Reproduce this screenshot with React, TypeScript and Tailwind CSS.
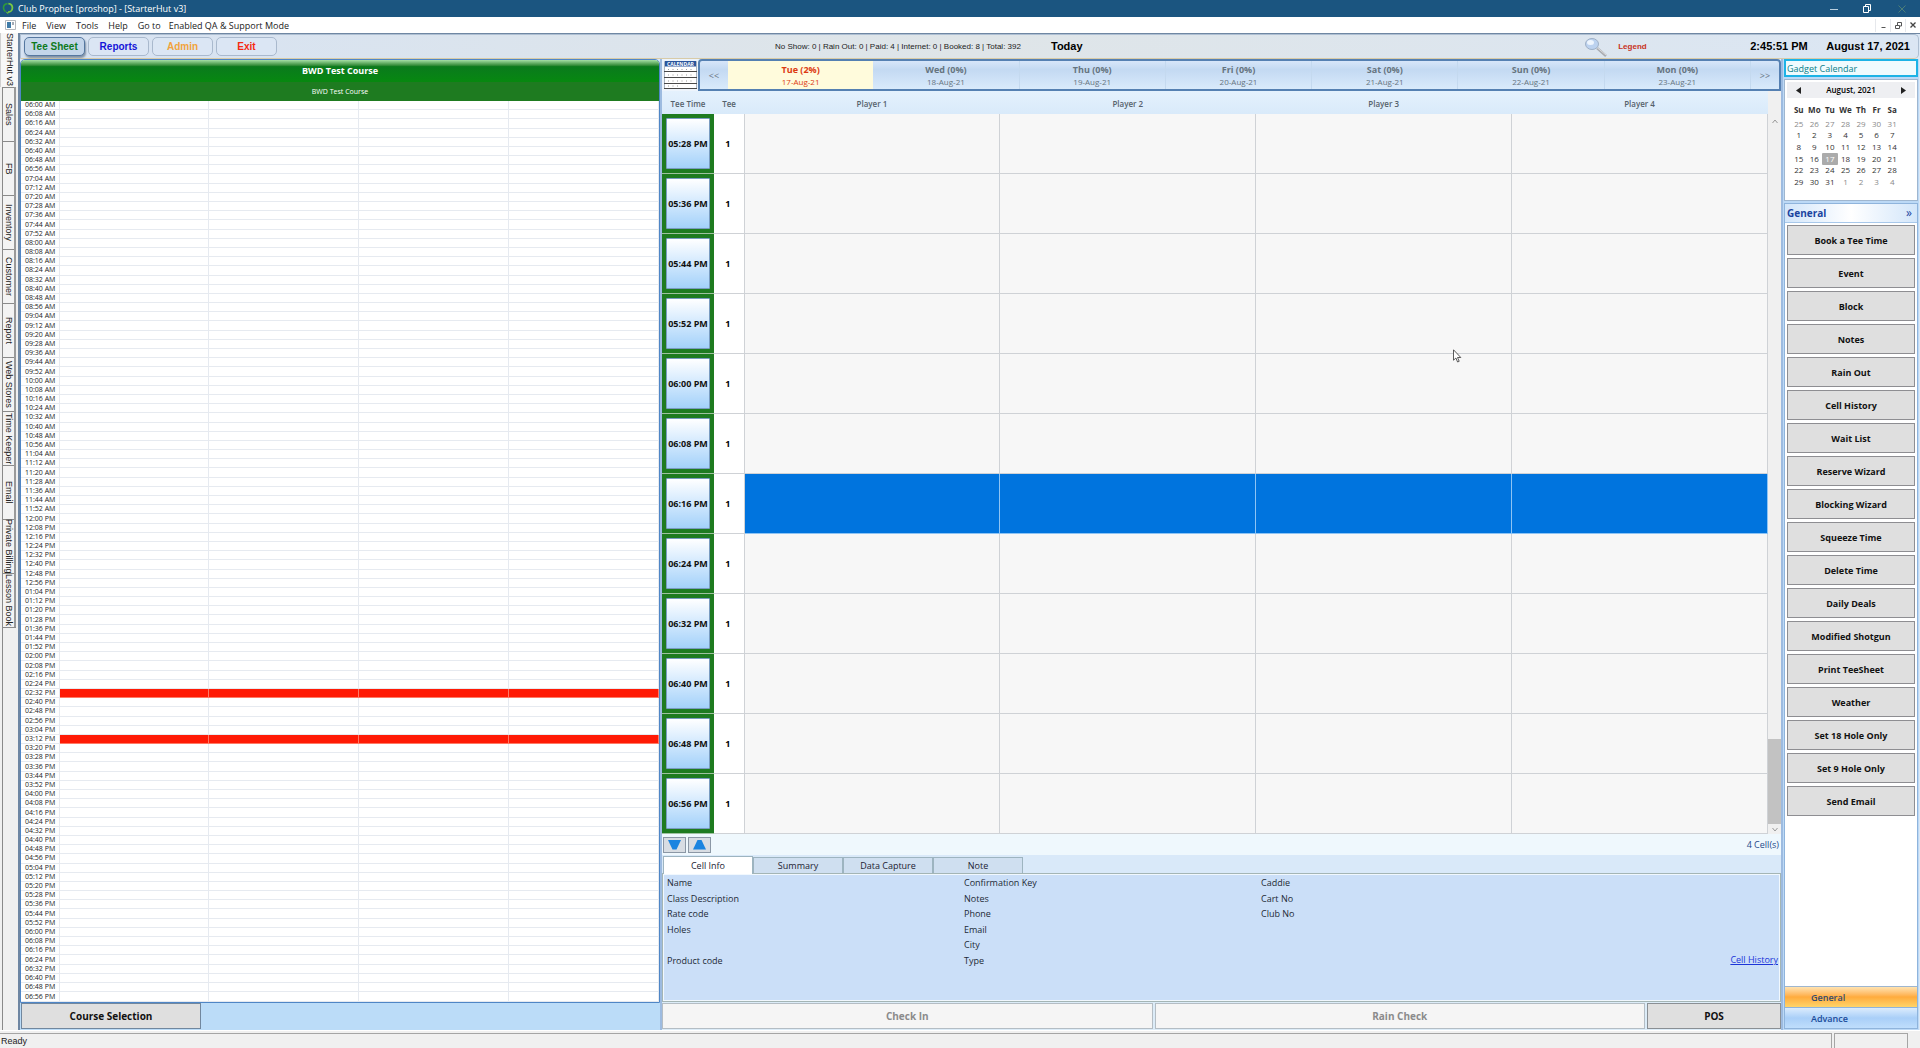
import React from "react";

const sideTabs = ["Sales", "FB", "Inventory", "Customer", "Report", "Web Stores", "Time Keeper", "Email", "Private Billing", "Lesson Book"];

const formatTime = (minutes: number) => {
  const h = Math.floor(minutes / 60);
  const m = minutes % 60;
  const h12 = h % 12 === 0 ? 12 : h % 12;
  return `${String(h12).padStart(2, "0")}:${String(m).padStart(2, "0")} ${h < 12 ? "AM" : "PM"}`;
};

const overview = Array.from({ length: 98 }, (_, i) => formatTime(360 + i * 8));
const bookedTimes = ["02:32 PM", "03:12 PM"];
const sheet = Array.from({ length: 12 }, (_, i) => formatTime(1048 + i * 8));
const selectedTime = "06:16 PM";

const days = [
  ["Tue (2%)", "17-Aug-21"],
  ["Wed (0%)", "18-Aug-21"],
  ["Thu (0%)", "19-Aug-21"],
  ["Fri (0%)", "20-Aug-21"],
  ["Sat (0%)", "21-Aug-21"],
  ["Sun (0%)", "22-Aug-21"],
  ["Mon (0%)", "23-Aug-21"],
];

const actions = [
  "Book a Tee Time", "Event", "Block", "Notes", "Rain Out", "Cell History", "Wait List", "Reserve Wizard", "Blocking Wizard",
  "Squeeze Time", "Delete Time", "Daily Deals", "Modified Shotgun", "Print TeeSheet", "Weather", "Set 18 Hole Only", "Set 9 Hole Only", "Send Email",
];

const weekdays = ["Su", "Mo", "Tu", "We", "Th", "Fr", "Sa"];
const monthCells = Array.from({ length: 42 }, (_, i) => {
  if (i < 7) return { day: 25 + i, outside: true };
  if (i < 38) return { day: i - 6, outside: false };
  return { day: i - 37, outside: true };
});
const monthRows = Array.from({ length: 6 }, (_, r) => monthCells.slice(r * 7, r * 7 + 7));

const infoColumns = [
  ["Name", "Class Description", "Rate code", "Holes", "", "Product code"],
  ["Confirmation Key", "Notes", "Phone", "Email", "City", "Type"],
  ["Caddie", "Cart No", "Club No"],
];

function TitleBar() {
  return (
    <header className="flex h-[17px] shrink-0 items-center bg-[#1b5580] pl-[2px] text-white">
      <svg width="12" height="14" viewBox="0 0 12 14" aria-hidden="true">
        <path d="M3.4 9.6A4.4 4.4 0 0 1 1.5 5.8C1.5 3.6 3.2 1.8 5.6 1.6" fill="none" stroke="#2f9a3a" strokeWidth="1.6" />
        <path d="M6.4 1.6c2.4.2 4 2 4 4.2 0 2.6-2 4.4-4.4 4.4" fill="none" stroke="#79c943" strokeWidth="1.8" />
        <path d="M3.4 9.6 6 10.2 6.4 12.6 4.6 11z" fill="#5fb83f" />
      </svg>
      <h1 className="ml-[4px] flex-1 text-[9px] leading-none">Club Prophet [proshop] - [StarterHut v3]</h1>
      <div className="flex items-center gap-[23px] pr-[13px]">
        <button aria-label="Minimize" className="flex h-[12px] w-[11px] items-center justify-center">
          <svg width="8" height="8" viewBox="0 0 8 8"><path d="M0 4.500h8" stroke="#b9cfdf" /></svg>
        </button>
        <button aria-label="Restore" className="flex h-[12px] w-[11px] items-center justify-center">
          <svg width="9" height="9" viewBox="0 0 9 9" fill="none" stroke="#fff"><path d="M.5 2.500h5v6h-5zM2.500 2.500v-2h5v6h-2" /></svg>
        </button>
        <button aria-label="Close" className="flex h-[12px] w-[11px] items-center justify-center">
          <svg width="8" height="8" viewBox="0 0 8 8"><path d="M.5.5l7 7M7.500.5l-7 7" stroke="#4d7f78" /></svg>
        </button>
      </div>
    </header>
  );
}

function MenuBar() {
  return (
    <nav className="flex h-[16px] shrink-0 items-center bg-white pl-[5px] text-[9px] leading-none text-[#222]">
      <svg width="11" height="10" viewBox="0 0 11 10" aria-hidden="true">
        <path d="M.5.5h10v9h-10z" fill="#fff" stroke="#b5b8bd" />
        <path d="M2 2h4v6H2z" fill="#3f7ba8" />
        <path d="M8 2v3" stroke="#44546a" />
      </svg>
      <button className="ml-[6px]">File</button>
      <button className="ml-[10px]">View</button>
      <button className="ml-[10px]">Tools</button>
      <button className="ml-[10px]">Help</button>
      <button className="ml-[10px]">Go to</button>
      <button className="ml-[8px] flex-1 text-left">Enabled QA &amp; Support Mode</button>
      <div className="flex items-center">
        <button aria-label="Minimize window" className="flex h-[13px] w-[15px] items-center justify-center border-l border-[#e6e8ec]">
          <svg width="7" height="7" viewBox="0 0 7 7"><path d="M1.500 5.500h4" stroke="#555" /></svg>
        </button>
        <button aria-label="Restore window" className="flex h-[13px] w-[15px] items-center justify-center border-l border-[#e6e8ec]">
          <svg width="7" height="7" viewBox="0 0 7 7" fill="none" stroke="#555"><path d="M.5 3.500h4v3h-4zM2.500 3V.5h4v3.500h-2" /></svg>
        </button>
        <button aria-label="Close window" className="flex h-[13px] w-[15px] items-center justify-center border-l border-[#e6e8ec]">
          <svg width="6" height="6" viewBox="0 0 6 6"><path d="M.5.5l5 5M5.500.5l-5 5" stroke="#444" strokeWidth="1.300" /></svg>
        </button>
      </div>
    </nav>
  );
}

function SideTabs() {
  return (
    <div className="flex w-[18px] shrink-0 flex-col bg-[#f0f0f0] font-['Liberation_Sans',sans-serif] text-[9px] leading-none text-[#222]">
      <button className="flex h-[54px] w-full items-center justify-center whitespace-nowrap border-l border-[#d0d0d0] bg-[#f7f7f7] [writing-mode:vertical-rl]">
        StarterHut v3
      </button>
      <div className="ml-[2px] flex w-[14px] flex-col border-r-2 border-[#9a9a9a]">
        {sideTabs.map((t) => (
          <button
            key={t}
            className="flex h-[54px] w-full items-center justify-center whitespace-nowrap border-l border-t border-[#8a8a8a] bg-[#f3f3f3] [writing-mode:vertical-rl]"
          >
            {t}
          </button>
        ))}
      </div>
      <div className="ml-[2px] w-[14px] flex-1 border-l border-t border-[#8a8a8a]" />
    </div>
  );
}

function Toolbar() {
  const base = "h-[19px] w-[61px] rounded-[5px] border text-[10px] font-bold leading-none";
  return (
    <div className="flex h-[25px] shrink-0 items-center rounded-r-[5px] border border-[#aebfd2] border-b-[#d8cba8] bg-gradient-to-r from-[#d7e3f3] via-[#dfe5e8] to-[#dbe6f3] pl-[3px] pr-[8px] font-['Liberation_Sans',sans-serif]">
      <div className="flex w-[751px] items-center gap-[3px]">
        <button className={`${base} border-[#5577a0] bg-[#c3d5ea] text-[#0d7a1c] shadow-[1px_2px_2px_#8291a3]`}>Tee Sheet</button>
        <button className={`${base} border-[#a9b9cd] bg-[#dbe6f4] text-[#1515d8]`}>Reports</button>
        <button className={`${base} border-[#a9b9cd] bg-[#dbe6f4] text-[#f2a33c]`}>Admin</button>
        <button className={`${base} border-[#a9b9cd] bg-[#dbe6f4] text-[#f52a10]`}>Exit</button>
      </div>
      <p className="w-[276px] whitespace-nowrap text-[8px] leading-none text-[#222]">No Show: 0 | Rain Out: 0 | Paid: 4 | Internet: 0 | Booked: 8 | Total: 392</p>
      <button className="text-[11px] font-bold leading-none">Today</button>
      <div className="flex-1" />
      <svg width="24" height="20" viewBox="0 0 24 20" aria-hidden="true">
        <path d="M13 11 22 19" stroke="#a8abb0" strokeWidth="2.400" />
        <path d="M13 10.500 22 18" stroke="#e8e8ea" strokeWidth=".8" />
        <ellipse cx="8" cy="7" rx="6.500" ry="5.500" fill="#bcd2ef" stroke="#9fb0c6" />
        <ellipse cx="6.500" cy="5.500" rx="3.500" ry="2.500" fill="#eef5fd" />
      </svg>
      <button className="ml-[10px] w-[132px] text-left text-[8px] font-bold leading-none text-[#c8321c]">Legend</button>
      <time className="w-[76px] whitespace-nowrap text-[11px] font-bold leading-none">2:45:51 PM</time>
      <time className="whitespace-nowrap text-[11px] font-bold leading-none">August 17, 2021</time>
    </div>
  );
}

function OverviewPanel() {
  return (
    <section className="flex w-[640px] min-w-0 shrink flex-col">
      <div className="flex min-h-0 flex-1 flex-col rounded-t-[5px] border border-[#4f86c6] bg-white">
        <div className="flex h-[22px] shrink-0 items-center justify-center rounded-t-[4px] bg-gradient-to-b from-[#a6e0a6] via-[#0a7a1c] via-30% to-[#07880f] pb-[2px] text-[9px] font-bold leading-none text-white">
          BWD Test Course
        </div>
        <div className="flex h-[19px] shrink-0 items-center justify-center bg-[#1e7b20] text-[7px] leading-none text-white">BWD Test Course</div>
        <div className="min-h-0 flex-1">
          <table className="h-full w-full table-fixed border-collapse">
            <colgroup>
              <col className="w-[38px]" />
              <col /><col /><col /><col />
            </colgroup>
            <tbody>
              {overview.map((t) => (
                <tr key={t}>
                  <th className="whitespace-nowrap border-b border-r border-[#e6eaf0] p-0 pl-[4px] text-left text-[7px] font-normal leading-[8px] text-[#222]">{t}</th>
                  {[0, 1, 2, 3].map((c) => (
                    <td key={c} className={bookedTimes.includes(t) ? "border-b border-r border-[#ff7a66] bg-[#ff1a05] p-0" : "border-b border-r border-[#e6eaf0] p-0"} />
                  ))}
                </tr>
              ))}
            </tbody>
          </table>
        </div>
      </div>
      <div className="flex h-[27px] shrink-0 bg-[#bbdcf8] pl-[1px]">
        <button className="h-[26px] w-[180px] border border-[#71879e] bg-[#dfdfdf] text-[10px] font-bold leading-none text-[#111]">Course Selection</button>
      </div>
    </section>
  );
}

function DayBar() {
  return (
    <div className="flex h-[32px] shrink-0">
      <button aria-label="Calendar" className="flex w-[36px] items-center justify-center bg-[#edf4fc]">
        <svg width="33" height="28" viewBox="0 0 33 28">
          <path d="M.5.5h32v27H.5z" fill="#fff" stroke="#a9b3bf" />
          <path d="M1 0h31v5.500H1z" fill="#2a559c" />
          <text x="16.500" y="4.800" textAnchor="middle" fontSize="5" fontWeight="700" fill="#fff">CALENDAR</text>
          <path d="M0 10.500h33M0 16.500h33M0 22.500h33M0 27.500h33" stroke="#4a4a4a" />
          <path d="M4 8.500h27M4 14h27M4 20h27M4 25h12" stroke="#999" strokeDasharray="1 3.500" />
        </svg>
      </button>
      <div className="flex min-w-0 flex-1 rounded-t-[4px] border-2 border-[#5580b2] bg-gradient-to-b from-[#d7e6f9] via-[#c3d9f2] via-30% to-[#d9eafb] text-[#66747f]">
        <button className="w-[28px] text-[9px] leading-none">&lt;&lt;</button>
        {days.map(([name, date], i) => (
          <button
            key={date}
            className={
              i === 0
                ? "flex min-w-0 flex-1 flex-col items-center justify-center gap-[4px] bg-[#fffbdc] leading-none text-[#dc3a12]"
                : "flex min-w-0 flex-1 flex-col items-center justify-center gap-[4px] border-r border-[#c4d9ef] leading-none"
            }
          >
            <span className="text-[9px] font-bold">{name}</span>
            <span className="text-[8px]">{date}</span>
          </button>
        ))}
        <button className="w-[28px] text-[9px] leading-none">&gt;&gt;</button>
      </div>
    </div>
  );
}

function TeeSheet() {
  return (
    <div className="flex min-h-0 flex-1">
      <table className="h-full min-w-0 flex-1 table-fixed border-collapse">
        <colgroup>
          <col className="w-[52px]" />
          <col className="w-[30px]" />
          <col /><col /><col /><col />
        </colgroup>
        <thead>
          <tr className="h-[23px] bg-gradient-to-b from-[#e4f1fd] to-[#d9eafa] text-[8px] leading-none text-[#56626c]">
            {["Tee Time", "Tee", "Player 1", "Player 2", "Player 3", "Player 4"].map((h) => (
              <th key={h} className="p-0 pt-[2px] font-semibold">{h}</th>
            ))}
          </tr>
        </thead>
        <tbody>
          {sheet.map((t) => (
            <tr key={t}>
              <td className="border-b border-[#9fc2a0] bg-[#1e7b20] p-[4px]">
                <button className="block h-[51px] w-full whitespace-nowrap rounded-[1px] border border-[#7a9cc0] bg-gradient-to-b from-white to-[#a3d1fa] text-[9px] font-bold leading-none text-[#111]">{t}</button>
              </td>
              <td className="border-b border-r border-[#cfd2d6] bg-white p-0 pr-[2px] text-center text-[9px] font-bold leading-none">1</td>
              {[0, 1, 2, 3].map((c) => (
                <td key={c} className={t === selectedTime ? "border border-[#8ec4f4] bg-[#0074de] p-0" : "border-b border-r border-[#cfd2d6] bg-[#f7f7f7] p-0"} />
              ))}
            </tr>
          ))}
        </tbody>
      </table>
      <div className="flex w-[13px] shrink-0 flex-col bg-[#f0f0f0] pt-[26px]">
        <button aria-label="Scroll up" className="flex h-[9px] items-center justify-center">
          <svg width="6" height="5" viewBox="0 0 6 5"><path d="M.5 4 3 1l2.500 3" fill="none" stroke="#999" /></svg>
        </button>
        <div className="flex-1" />
        <div className="h-[85px] bg-[#c2c2c2]" />
        <button aria-label="Scroll down" className="flex h-[10px] items-center justify-center">
          <svg width="6" height="5" viewBox="0 0 6 5"><path d="M.5 1 3 4l2.500-3" fill="none" stroke="#999" /></svg>
        </button>
      </div>
    </div>
  );
}

function DetailPanel() {
  const tab = "flex h-[16px] w-[90px] items-center justify-center border border-b-0 border-[#9db4c0] bg-[#cfdff0] text-[9px] leading-none text-[#223]";
  return (
    <>
      <div className="flex h-[21px] shrink-0 items-center gap-[2px] bg-[#eff8fd] pl-[1px] pr-[2px]">
        <button aria-label="Next" className="flex h-[16px] w-[23px] items-center justify-center border border-[#8b97a5] bg-[#d8dde3]">
          <svg width="13" height="10" viewBox="0 0 13 10"><path d="M0 0h13L8.500 9.500h-4z" fill="#1a84e0" /></svg>
        </button>
        <button aria-label="Previous" className="flex h-[16px] w-[23px] items-center justify-center border border-[#8b97a5] bg-[#d8dde3]">
          <svg width="13" height="10" viewBox="0 0 13 10"><path d="M0 9.500h13L8.500 0h-4z" fill="#1a84e0" /></svg>
        </button>
        <span className="flex-1 text-right text-[9px] leading-none text-[#1f4a8a]">4 Cell(s)</span>
      </div>
      <div className="flex h-[18px] shrink-0 items-end bg-[#d9e9f9] pl-[1px]">
        <button className="z-10 -mb-px flex h-[18px] w-[90px] items-center justify-center border border-b-0 border-[#9db4c0] bg-white text-[9px] leading-none text-[#223]">Cell Info</button>
        <button className={tab}>Summary</button>
        <button className={tab}>Data Capture</button>
        <button className={tab}>Note</button>
      </div>
      <div className="shrink-0 border border-[#a4b5b5] bg-[#f1f8fe] p-[1px]">
        <div className="relative grid h-[125px] grid-cols-[297px_297px_1fr] bg-[#cbdff8] pl-[3px] text-[9px] leading-[16px] text-[#1d2a36]">
          {infoColumns.map((col, i) => (
            <ul key={i} className="grid h-[93px] grid-rows-6">
              {col.map((label, j) => (
                <li key={j}>{label}</li>
              ))}
            </ul>
          ))}
          <a href="#history" className="absolute right-px top-[77px] text-[#1c35d8] underline">Cell History</a>
        </div>
      </div>
      <div className="flex h-[28px] shrink-0 gap-[2px] bg-[#dcecf8] pt-[1px] text-[10px] font-bold leading-none">
        <button disabled className="h-[26px] min-w-0 flex-1 border border-[#b4bdc4] bg-[#f5f5f5] text-[#8b8b8b]">Check In</button>
        <button disabled className="h-[26px] min-w-0 flex-1 border border-[#b4bdc4] bg-[#f5f5f5] text-[#8b8b8b]">Rain Check</button>
        <button className="h-[26px] w-[134px] border border-[#8a8f94] bg-[#dfdfdf] text-[#111]">POS</button>
      </div>
    </>
  );
}

function Sidebar() {
  return (
    <aside className="flex w-[136px] shrink-0 flex-col bg-[#bcd9f6] px-[1px] pb-[1px]">
      <h2 className="flex h-[18px] shrink-0 items-center border-2 border-[#1db3e6] bg-[#f0fbfe] pl-px text-[9px] leading-none text-[#087f8a]">Gadget Calendar</h2>
      <div className="mt-[2px] h-[122px] shrink-0 border border-[#9fb6cf] bg-white px-[2px] pt-[2px]">
        <div className="flex h-[16px] items-center justify-between bg-[#eeeff2] px-[9px] text-[8px] font-semibold leading-none">
          <button aria-label="Previous month"><svg width="5" height="7" viewBox="0 0 5 7"><path d="M5 0v7L0 3.500z" fill="#222" /></svg></button>
          <span>August, 2021</span>
          <button aria-label="Next month"><svg width="5" height="7" viewBox="0 0 5 7"><path d="M0 0v7l5-3.500z" fill="#222" /></svg></button>
        </div>
        <table className="ml-[4px] mt-[4px] h-[86px] w-[109px] table-fixed border-collapse text-center text-[8px] leading-none text-[#333]">
          <thead>
            <tr className="h-[16px]">{weekdays.map((d) => <th key={d} className="p-0 font-bold">{d}</th>)}</tr>
          </thead>
          <tbody>
            {monthRows.map((row, r) => (
              <tr key={r}>
                {row.map(({ day, outside }) => (
                  <td
                    key={day}
                    className={!outside && day === 17 ? "rounded-[1px] bg-[#ababab] p-0 text-white" : outside ? "p-0 text-[#8a8a8a]" : "p-0"}
                  >
                    {day}
                  </td>
                ))}
              </tr>
            ))}
          </tbody>
        </table>
      </div>
      <div className="mt-[2px] flex min-h-0 flex-1 flex-col border border-[#8fb4dc] bg-white">
        <div className="flex h-[19px] shrink-0 items-center justify-between border-b border-[#a8c8ea] bg-gradient-to-r from-[#d3e6fa] via-white to-[#d3e6fa] pl-[2px] pr-[5px] leading-none text-[#1b44a0]">
          <h2 className="text-[10px] font-bold">General</h2>
          <button aria-label="Collapse" className="text-[12px]">»</button>
        </div>
        <div className="flex flex-1 flex-col gap-[3px] px-[2px] pt-[2px]">
          {actions.map((a) => (
            <button key={a} className="h-[30px] shrink-0 whitespace-nowrap border border-[#8e8e92] bg-[#dfdfdf] text-[9px] font-bold leading-none text-[#111]">{a}</button>
          ))}
        </div>
        <button className="h-[21px] shrink-0 border-t border-[#9fb6cf] bg-gradient-to-b from-[#ffe3b0] via-[#ffab3c] to-[#ffd469] pl-[26px] text-left text-[9px] font-semibold leading-none text-[#334a70]">General</button>
        <button className="h-[21px] shrink-0 border-t border-[#8fb4dc] bg-gradient-to-b from-[#dcecfd] via-[#a9cff8] to-[#bfdefc] pl-[26px] text-left text-[9px] font-semibold leading-none text-[#1b4c9a]">Advance</button>
      </div>
    </aside>
  );
}

export default function App() {
  return (
    <div className="relative flex h-screen flex-col overflow-hidden bg-[#f0f0f0] font-['Open_Sans',sans-serif] text-black">
      <TitleBar />
      <MenuBar />
      <div className="flex min-h-0 flex-1">
        <SideTabs />
        <main className="flex min-w-0 flex-1 flex-col border-l-2 border-t border-[#6f87a3] bg-[#dce8f5] pr-[1px]">
          <Toolbar />
          <div className="flex min-h-0 flex-1">
            <OverviewPanel />
            <section className="flex min-w-0 flex-1 flex-col border-l-2 border-r-2 border-[#9dbbe0] bg-[#e4f1fd]">
              <DayBar />
              <TeeSheet />
              <DetailPanel />
            </section>
            <Sidebar />
          </div>
        </main>
      </div>
      <footer className="flex h-[18px] shrink-0 gap-[2px] border-t border-[#fff] pr-[12px] pt-[2px] text-[9px] leading-none text-[#222] font-['Liberation_Sans',sans-serif]">
        <div className="flex flex-1 items-center border-r border-t border-[#a5a5a5] pl-[1px]">Ready</div>
        <div className="w-[74px] border-l border-r border-t border-[#a5a5a5]" />
      </footer>
      <svg className="pointer-events-none absolute left-[75.7%] top-[33.3%]" width="9" height="14" viewBox="0 0 9 14" aria-hidden="true">
        <path d="M.5.8v10.400l2.400-2.200 1.700 4 1.600-.7-1.700-3.800h3.300z" fill="#fff" stroke="#333" strokeWidth=".8" />
      </svg>
    </div>
  );
}
